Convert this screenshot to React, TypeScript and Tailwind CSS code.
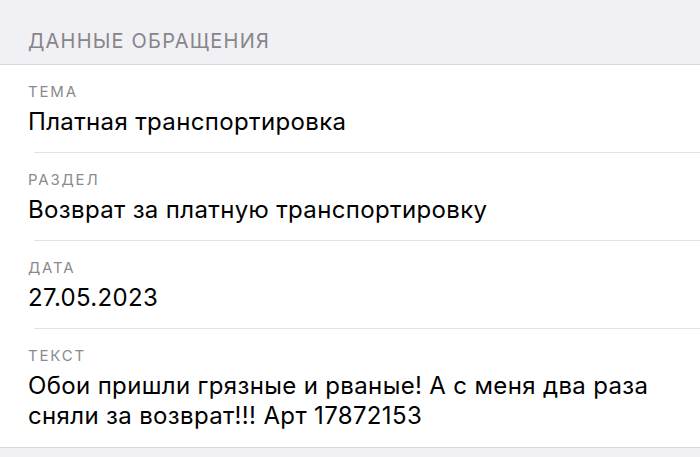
const rows = [
  { label: 'Тема', value: 'Платная транспортировка' },
  { label: 'Раздел', value: 'Возврат за платную транспортировку' },
  { label: 'Дата', value: '27.05.2023' },
  { label: 'Текст', value: 'Обои пришли грязные и рваные! А с меня два раза сняли за возврат!!! Арт 17872153' },
];

export default function App() {
  return (
    <div className="min-h-screen bg-[#f1f0f5] font-['Inter',sans-serif]">
      <div className="h-[64px] px-[28px] pt-[29px] text-[20px] leading-[24px] tracking-[1.2px] uppercase text-[#86868a]">
        Данные обращения
      </div>
      <div className="bg-white border-y border-[#d9d9dd]">
        {rows.map((row, i) => (
          <div key={row.label} className="pl-[34px]">
            <div
              className={`-ml-[6px] pr-[28px] pt-[17px] ${
                i === rows.length - 1 ? 'pb-[16px]' : 'pb-[15px]'
              }`}
            >
              <div className="text-[15px] leading-[20px] tracking-[1.8px] uppercase text-[#8a8a8e]">
                {row.label}
              </div>
              <div className="mt-[5px] text-[24px] leading-[30px] tracking-[0.35px] text-black">
                {row.value}
              </div>
            </div>
            {i < rows.length - 1 && <div className="h-px bg-[#e2e2e6]" />}
          </div>
        ))}
      </div>
    </div>
  );
}
